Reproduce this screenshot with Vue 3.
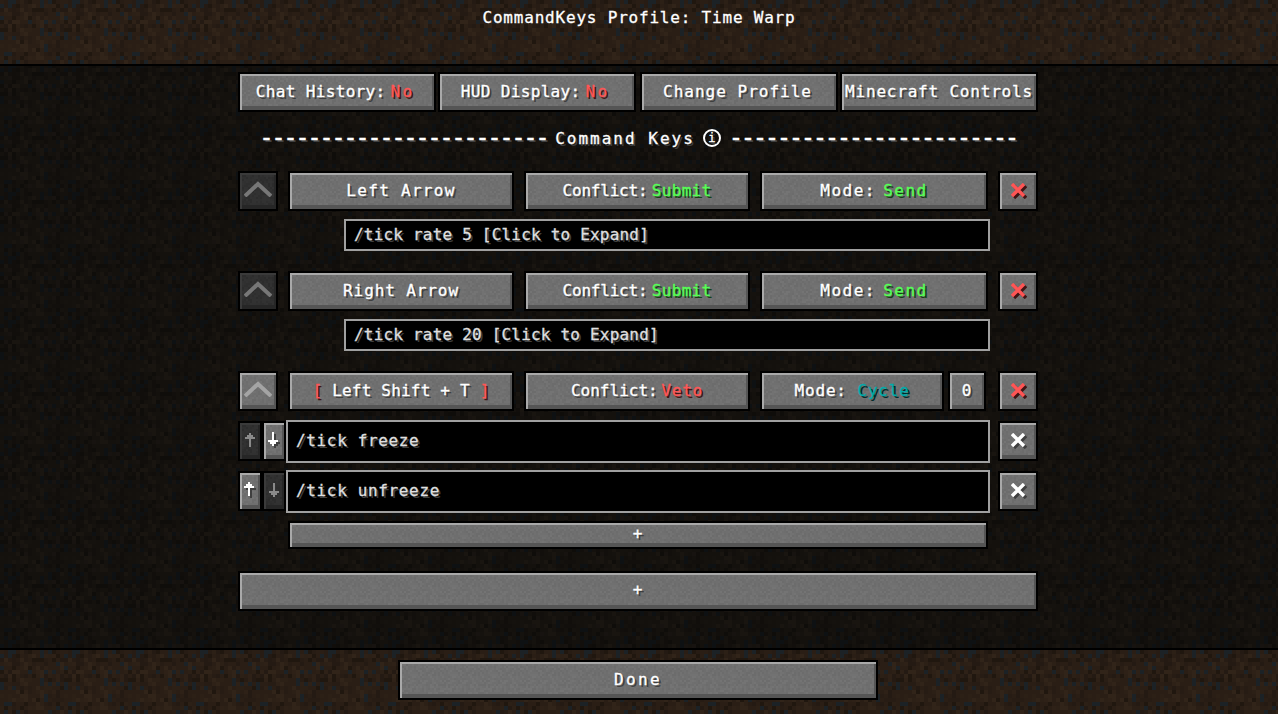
<script setup>
// seeded noise so the tiles stay the same on every load
const tile = (size, cell, colors, seed) => {
  let rects = ''
  const n = size / cell
  for (let y = 0; y < n; y++) {
    for (let x = 0; x < n; x++) {
      const h = Math.sin((x + 1) * 12.9898 + (y + 1) * 78.233 + seed) * 43758.5453
      const c = colors[Math.floor((h - Math.floor(h)) * colors.length)]
      rects += `<rect x='${x * cell}' y='${y * cell}' width='${cell}' height='${cell}' fill='${c}'/>`
    }
  }
  const svg = `<svg xmlns='http://www.w3.org/2000/svg' width='${size}' height='${size}' shape-rendering='crispEdges'>${rects}</svg>`
  return `url("data:image/svg+xml,${encodeURIComponent(svg)}")`
}

const textures = {
  '--dirt': tile(64, 4, ['#2a1e15', '#2a1e15', '#2e2117', '#241a13', '#312419', '#20170f', '#2c2016', '#2a1e15', '#271c14', '#1c2226'], 3),
  '--dark': tile(64, 4, ['#14110d', '#14110d', '#171310', '#110e0b', '#191510', '#0f0d0a', '#15120e', '#14110d', '#120f0c', '#0e1113'], 3),
  '--stone': tile(40, 2, ['#707070', '#6e6e6e', '#727272', '#6c6c6c', '#747474', '#6f6f6f'], 5),
  '--stone-off': tile(40, 2, ['#303030', '#2e2e2e', '#323232', '#2c2c2c', '#313131'], 5)
}

const topButtons = [
  { label: 'Chat History: ', value: 'No', tone: 'red', cls: 'tight' },
  { label: 'HUD Display: ', value: 'No', tone: 'red', cls: 'tight' },
  { label: 'Change Profile', cls: 'gap-left' },
  { label: 'Minecraft Controls' }
]

const dashes = '-'.repeat(24)
</script>

<template>
  <div class="screen" :style="textures">
    <header class="title-bar">
      <span class="title">CommandKeys Profile: Time Warp</span>
    </header>

    <main class="content">
      <div class="top-row">
        <button v-for="b in topButtons" :key="b.label" class="btn top-btn" :class="b.cls">
          {{ b.label }}<span v-if="b.value" :class="b.tone">{{ b.value }}</span>
        </button>
      </div>

      <div class="section-title">
        <span class="dash">{{ dashes }}</span>
        <span class="section-name">Command Keys</span>
        <span class="info">i</span>
        <span class="dash">{{ dashes }}</span>
      </div>

      <section class="key-block">
        <div class="key-row">
          <button class="btn square off">
            <svg class="chevron dimmed" width="28" height="16" viewBox="0 0 28 16"><path d="M1 15 L14 3 L27 15" /></svg>
          </button>
          <button class="btn key-btn">Left Arrow</button>
          <button class="btn conflict-btn">Conflict: <span class="green">Submit</span></button>
          <button class="btn mode-btn">Mode: <span class="green">Send</span></button>
          <button class="btn square">
            <svg class="cross danger" width="16" height="16" viewBox="0 0 16 16"><path class="under" d="M3 3 L15 15 M15 3 L3 15" /><path d="M1 1 L13 13 M13 1 L1 13" /></svg>
          </button>
        </div>
        <div class="summary">/tick rate 5 [Click to Expand]</div>
      </section>

      <section class="key-block">
        <div class="key-row">
          <button class="btn square off">
            <svg class="chevron dimmed" width="28" height="16" viewBox="0 0 28 16"><path d="M1 15 L14 3 L27 15" /></svg>
          </button>
          <button class="btn key-btn right">Right Arrow</button>
          <button class="btn conflict-btn">Conflict: <span class="green">Submit</span></button>
          <button class="btn mode-btn">Mode: <span class="green">Send</span></button>
          <button class="btn square">
            <svg class="cross danger" width="16" height="16" viewBox="0 0 16 16"><path class="under" d="M3 3 L15 15 M15 3 L3 15" /><path d="M1 1 L13 13 M13 1 L1 13" /></svg>
          </button>
        </div>
        <div class="summary">/tick rate 20 [Click to Expand]</div>
      </section>

      <section class="key-block">
        <div class="key-row">
          <button class="btn square">
            <svg class="chevron" width="28" height="16" viewBox="0 0 28 16"><path d="M1 15 L14 3 L27 15" /></svg>
          </button>
          <button class="btn key-btn shift"><span class="red">[ </span>Left Shift + T<span class="red"> ]</span></button>
          <button class="btn conflict-btn veto">Conflict: <span class="red">Veto</span></button>
          <button class="btn cycle-btn">Mode: <span class="teal">Cycle</span></button>
          <button class="btn count-btn">0</button>
          <button class="btn square">
            <svg class="cross danger" width="16" height="16" viewBox="0 0 16 16"><path class="under" d="M3 3 L15 15 M15 3 L3 15" /><path d="M1 1 L13 13 M13 1 L1 13" /></svg>
          </button>
        </div>

        <div class="step-row">
          <button class="btn arrow off">
            <svg class="arrow-icon faint" width="10" height="14" viewBox="0 0 10 14"><path d="M4 0h2v2h2v2h2v2H6v8H4V6H0V4h2V2h2z" /></svg>
          </button>
          <button class="btn arrow">
            <svg class="arrow-icon" width="12" height="16" viewBox="0 0 12 16"><path class="under" d="M6 2h2v8h4v2h-2v2H8v2H6v-2H4v-2H2v-2h4z" /><path d="M4 0h2v8h4v2H8v2H6v2H4v-2H2v-2H0V8h4z" /></svg>
          </button>
          <div class="command">/tick freeze</div>
          <button class="btn square">
            <svg class="cross" width="16" height="16" viewBox="0 0 16 16"><path class="under" d="M3 3 L15 15 M15 3 L3 15" /><path d="M1 1 L13 13 M13 1 L1 13" /></svg>
          </button>
        </div>
        <div class="step-row">
          <button class="btn arrow">
            <svg class="arrow-icon" width="12" height="16" viewBox="0 0 12 16"><path class="under" d="M6 2h2v2h2v2h2v2H8v8H6V8H2V6h2V4h2z" /><path d="M4 0h2v2h2v2h2v2H6v8H4V6H0V4h2V2h2z" /></svg>
          </button>
          <button class="btn arrow off">
            <svg class="arrow-icon faint" width="10" height="14" viewBox="0 0 10 14"><path d="M4 0h2v8h4v2H8v2H6v2H4v-2H2v-2H0V8h4z" /></svg>
          </button>
          <div class="command">/tick unfreeze</div>
          <button class="btn square">
            <svg class="cross" width="16" height="16" viewBox="0 0 16 16"><path class="under" d="M3 3 L15 15 M15 3 L3 15" /><path d="M1 1 L13 13 M13 1 L1 13" /></svg>
          </button>
        </div>

        <button class="btn add-step">+</button>
      </section>

      <button class="btn add-key">+</button>
    </main>

    <footer class="done-bar">
      <button class="btn done">Done</button>
    </footer>
  </div>
</template>

<style scoped>
.screen {
  width: 1278px;
  height: 714px;
  display: flex;
  flex-direction: column;
  overflow: hidden;
  font-family: "DejaVu Sans Mono", monospace;
  font-size: 16px;
  letter-spacing: 0.8px;
  color: #fff;
  -webkit-text-stroke: 0.3px currentColor;
  text-shadow: 2px 2px 0 #3f3f3f;
  background-image: var(--dark);
}

.title-bar {
  height: 66px;
  flex: none;
  display: flex;
  justify-content: center;
  padding-top: 7px;
  box-sizing: border-box;
  background-image: var(--dirt);
  border-bottom: 2px solid #000;
}
.title { text-shadow: none; line-height: 22px; }

.content {
  flex: 1;
  width: 796px;
  margin-left: 240px;
  padding-top: 8px;
  box-sizing: border-box;
}

.btn {
  display: flex;
  align-items: center;
  justify-content: center;
  flex: none;
  height: 36px;
  padding: 0 0 2px;
  border: 0;
  outline: 2px solid #000;
  font: inherit;
  letter-spacing: inherit;
  color: inherit;
  text-shadow: inherit;
  white-space: pre;
  background-image: var(--stone);
  box-shadow: inset 2px 2px 0 #a9a9a9, inset -2px -4px 0 #555;
}
.btn.off {
  background-image: var(--stone-off);
  box-shadow: inset 2px 2px 0 #3a3a3a, inset -2px -4px 0 #262626;
}

.top-row { display: flex; gap: 6px; }
.top-btn { width: 194px; }
.gap-left { margin-left: 2px; letter-spacing: 1px; padding-right: 3px; }
.tight { letter-spacing: 0.35px; padding-right: 4px; }
.tight span { margin-left: -5px; letter-spacing: 2.2px; }

.section-title {
  display: flex;
  justify-content: center;
  align-items: center;
  gap: 8px;
  height: 22px;
  margin-top: 17px;
  margin-bottom: 1px;
}
.dash { font-size: 24px; letter-spacing: -2.45px; line-height: 22px; }
.section-name { letter-spacing: 2px; }
.info {
  box-sizing: content-box;
  width: 14px;
  height: 14px;
  border: 2px solid #fff;
  border-radius: 50%;
  display: flex;
  align-items: center;
  justify-content: center;
  font-size: 12px;
  letter-spacing: 0;
}

.key-block { margin-top: 22px; }
.section-title + .key-block { margin-top: 24px; }

.key-row { display: flex; align-items: center; }
.square { width: 36px; }
.key-btn { width: 222px; margin-left: 14px; letter-spacing: 1.3px; }
.key-btn.right { letter-spacing: 0.9px; }
.key-btn.shift { letter-spacing: 0.2px; }
.conflict-btn { width: 222px; margin-left: 14px; letter-spacing: -0.2px; }
.conflict-btn span { margin-left: -5px; letter-spacing: 0.3px; }
.conflict-btn.veto { letter-spacing: 0; }
.conflict-btn.veto span { margin-left: -6px; letter-spacing: 0.8px; }
.mode-btn { width: 224px; margin-left: 14px; margin-right: 14px; letter-spacing: 1.5px; }
.mode-btn span { margin-left: -4px; }
.cycle-btn { width: 180px; margin-left: 14px; }
.count-btn { width: 34px; margin-left: 8px; margin-right: 16px; }

.summary {
  width: 646px;
  height: 32px;
  margin: 10px 0 0 104px;
  padding-left: 8px;
  box-sizing: border-box;
  border: 2px solid #a0a0a0;
  background: #000;
  line-height: 27px;
  letter-spacing: 0.2px;
  color: #e0e0e0;
}

.step-row {
  display: flex;
  align-items: flex-start;
  height: 43px;
  margin-top: 11px;
}
.step-row + .step-row { margin-top: 7px; }
.step-row .btn { margin-top: 3px; }
.arrow { width: 20px; margin-right: 4px; }
.arrow + .arrow { margin-right: 2px; }
.command {
  width: 704px;
  height: 43px;
  margin-right: 10px;
  padding-left: 8px;
  box-sizing: border-box;
  border: 2px solid #a0a0a0;
  background: #000;
  line-height: 38px;
  letter-spacing: 0.65px;
  color: #e0e0e0;
}

.add-step {
  width: 696px;
  height: 24px;
  margin: 10px 0 0 50px;
  padding-bottom: 4px;
}
.add-key {
  width: 796px;
  margin-top: 26px;
  padding-bottom: 4px;
}

.done-bar {
  flex: none;
  height: 66px;
  display: flex;
  justify-content: center;
  padding: 12px 2px 0 0;
  box-sizing: border-box;
  background-image: var(--dirt);
  border-top: 2px solid #000;
}
.done { width: 476px; letter-spacing: 2.4px; }

.chevron { margin-bottom: 2px; }
.chevron path { fill: none; stroke: #a4a4a4; stroke-width: 4; }
.chevron.dimmed path { stroke: #777; }

.cross { margin: 2px 0 0 2px; }
.cross path { fill: none; stroke: #fff; stroke-width: 3.4; }
.cross path.under { stroke: #3f3f3f; }
.cross.danger path { stroke: #ff5555; }
.cross.danger path.under { stroke: #3f1515; }

.arrow-icon path { fill: #fff; }
.arrow-icon path.under { fill: #3f3f3f; }
.arrow-icon { shape-rendering: crispEdges; }
.arrow-icon.faint path { fill: #8a8a8a; }

.red { color: #ff5555; text-shadow: 2px 2px 0 #3f1515; }
.green { color: #55ff55; text-shadow: 2px 2px 0 #153f15; }
.teal { color: #00aaaa; text-shadow: 2px 2px 0 #002a2a; }
</style>
